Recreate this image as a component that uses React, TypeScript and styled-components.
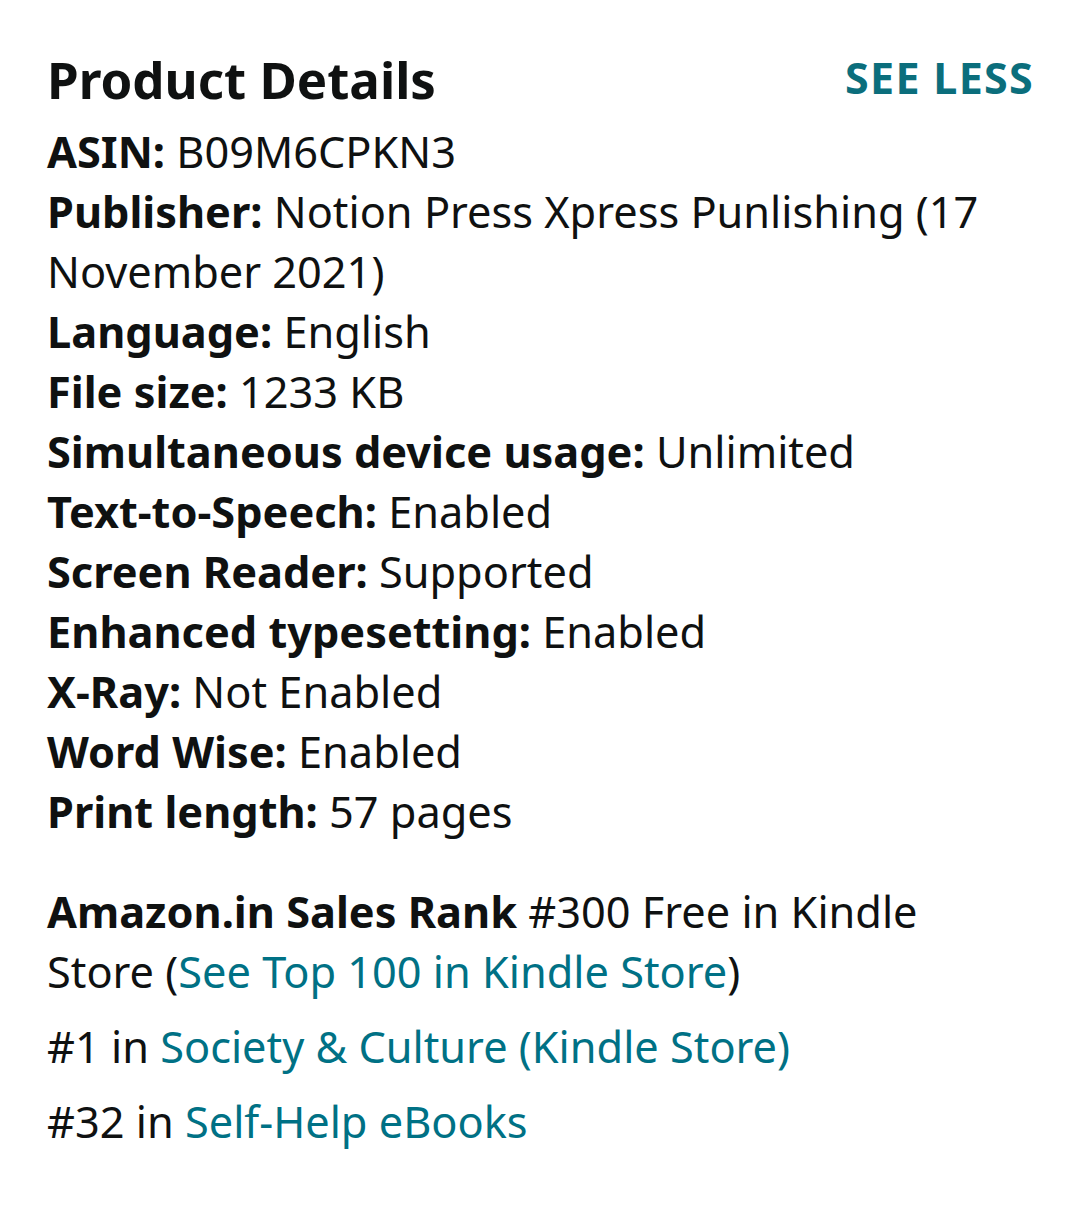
import React from "react";
import styled, { createGlobalStyle } from "styled-components";

const Global = createGlobalStyle`
  html, body { margin: 0; padding: 0; background: #ffffff; }
  body { font-family: "Noto Sans", "Open Sans", sans-serif; color: #0f1111; }
`;

const Page = styled.div`
  width: 1073px;
  min-height: 1211px;
  box-sizing: border-box;
  padding: 44px 40px 0 47px;
  background: #fff;
`;

const Header = styled.div`
  display: flex;
  justify-content: space-between;
  align-items: flex-start;
  height: 78px;
`;

const Title = styled.h2`
  margin: 0;
  font-size: 51px;
  font-weight: 700;
  line-height: 70px;
  color: #0f1111;
`;

const SeeLess = styled.a`
  margin-top: -1px;
  font-size: 43px;
  font-weight: 700;
  line-height: 70px;
  color: #0b6e7c;
  text-decoration: none;
  letter-spacing: 1.3px;
  margin-right: -1px;
`;

const Body = styled.div`
  padding-right: 20px;
  font-size: 43.3px;
  line-height: 60px;
`;

const List = styled.div`
  display: flex;
  flex-direction: column;
`;

const Row = styled.div`
  margin: 0;
`;

const Label = styled.b`
  font-weight: 700;
`;

const Rank = styled.div<{ $gap: number }>`
  margin-top: ${(p) => p.$gap}px;
`;

const Link = styled.a`
  color: #007185;
  text-decoration: none;
`;

const rows: [string, string][] = [
  ["ASIN:", "B09M6CPKN3"],
  ["Publisher:", "Notion Press Xpress Punlishing (17 November 2021)"],
  ["Language:", "English"],
  ["File size:", "1233 KB"],
  ["Simultaneous device usage:", "Unlimited"],
  ["Text-to-Speech:", "Enabled"],
  ["Screen Reader:", "Supported"],
  ["Enhanced typesetting:", "Enabled"],
  ["X-Ray:", "Not Enabled"],
  ["Word Wise:", "Enabled"],
  ["Print length:", "57 pages"],
];

export default function App() {
  return (
    <Page>
      <Global />
      <Header>
        <Title>Product Details</Title>
        <SeeLess href="#">SEE LESS</SeeLess>
      </Header>
      <Body>
        <List>
          {rows.map(([l, v]) => (
            <Row key={l}>
              <Label>{l}</Label> {v}
            </Row>
          ))}
        </List>
        <Rank $gap={40}>
          <Label>Amazon.in Sales Rank</Label> #300 Free in Kindle Store (
          <Link href="#">See Top 100 in Kindle Store</Link>)
        </Rank>
        <Rank $gap={15}>
          #1 in <Link href="#">Society &amp; Culture (Kindle Store)</Link>
        </Rank>
        <Rank $gap={15}>
          #32 in <Link href="#">Self-Help eBooks</Link>
        </Rank>
      </Body>
    </Page>
  );
}
